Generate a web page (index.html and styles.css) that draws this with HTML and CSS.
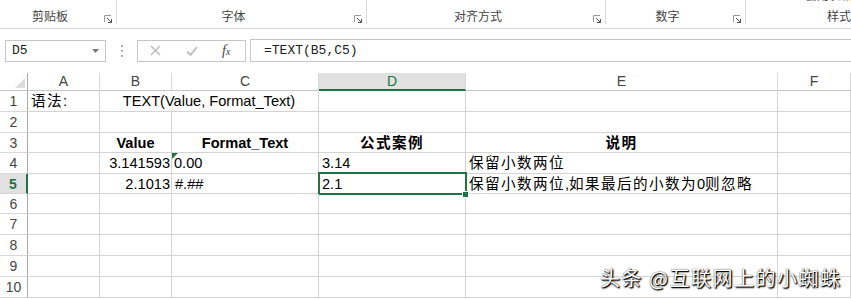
FILE: index.html
```html
<!DOCTYPE html>
<html lang="zh-CN">
<head>
  <meta charset="UTF-8" />
  <title>TEXT 函数</title>
  <link rel="stylesheet" href="styles.css">
</head>
<body>
  <div class="ribbon">
    <div class="group g1">
      <span class="glabel">剪贴板</span>
      <svg class="launch" width="8" height="8" viewBox="0 0 8 8"><path d="M0.5 7V0.5H7" fill="none" stroke="#999"/><path d="M3 3L7.5 7.5M4 7.5H7.5V4" fill="none" stroke="#555"/></svg>
    </div>
    <div class="group g2">
      <span class="glabel">字体</span>
      <svg class="launch" width="8" height="8" viewBox="0 0 8 8"><path d="M0.5 7V0.5H7" fill="none" stroke="#999"/><path d="M3 3L7.5 7.5M4 7.5H7.5V4" fill="none" stroke="#555"/></svg>
    </div>
    <div class="group g3">
      <span class="glabel">对齐方式</span>
      <svg class="launch" width="8" height="8" viewBox="0 0 8 8"><path d="M0.5 7V0.5H7" fill="none" stroke="#999"/><path d="M3 3L7.5 7.5M4 7.5H7.5V4" fill="none" stroke="#555"/></svg>
    </div>
    <div class="group g4">
      <span class="glabel">数字</span>
      <svg class="launch" width="8" height="8" viewBox="0 0 8 8"><path d="M0.5 7V0.5H7" fill="none" stroke="#999"/><path d="M3 3L7.5 7.5M4 7.5H7.5V4" fill="none" stroke="#555"/></svg>
    </div>
    <div class="group g5">
      <span class="cut">套用表格</span>
      <span class="glabel">样式</span>
    </div>
  </div>

  <div class="formulabar">
    <div class="namebox">
      <span>D5</span>
      <svg width="7" height="4" viewBox="0 0 7 4"><path d="M0 0H7L3.5 4z" fill="#777"/></svg>
    </div>
    <div class="dots"><i></i><i></i><i></i></div>
    <div class="fxbox">
      <svg width="11" height="11" viewBox="0 0 11 11"><path d="M1 1L10 10M10 1L1 10" stroke="#b4b4b4" stroke-width="1.2" fill="none"/></svg>
      <svg width="12" height="10" viewBox="0 0 12 10"><path d="M1 5.5L4.5 9L11 1" stroke="#bdbdbd" stroke-width="1.8" fill="none"/></svg>
      <span class="fx">f<small>x</small></span>
    </div>
    <div class="formula">=TEXT(B5,C5)</div>
  </div>

  <div class="sheet">
    <div class="corner"><svg width="10" height="10" viewBox="0 0 10 10"><path d="M10 0V10H0z" fill="#dcdcdc"/></svg></div>
    <div class="colhead">A</div>
    <div class="colhead">B</div>
    <div class="colhead">C</div>
    <div class="colhead active">D</div>
    <div class="colhead">E</div>
    <div class="colhead">F</div>

    <div class="rowhead">1</div>
    <div class="cell"><span class="zh">语法:</span></div>
    <div class="cell span2 center">TEXT(Value, Format_Text)</div>
    <div class="cell"></div>
    <div class="cell"></div>
    <div class="cell"></div>

    <div class="rowhead">2</div>
    <div class="cell"></div><div class="cell"></div><div class="cell"></div><div class="cell"></div><div class="cell"></div><div class="cell"></div>

    <div class="rowhead">3</div>
    <div class="cell"></div>
    <div class="cell center bold">Value</div>
    <div class="cell center bold">Format_Text</div>
    <div class="cell center bold"><span class="zh">公式案例</span></div>
    <div class="cell center bold"><span class="zh">说明</span></div>
    <div class="cell"></div>

    <div class="rowhead">4</div>
    <div class="cell"></div>
    <div class="cell right">3.141593</div>
    <div class="cell flagged">0.00</div>
    <div class="cell">3.14</div>
    <div class="cell"><span class="zh">保留小数两位</span></div>
    <div class="cell"></div>

    <div class="rowhead active">5</div>
    <div class="cell"></div>
    <div class="cell right">2.1013</div>
    <div class="cell">#.##</div>
    <div class="cell selected">2.1<span class="handle"></span></div>
    <div class="cell"><span class="zh">保留小数两位</span>,<span class="zh">如果最后的小数为</span>0<span class="zh">则忽略</span></div>
    <div class="cell"></div>

    <div class="rowhead">6</div>
    <div class="cell"></div><div class="cell"></div><div class="cell"></div><div class="cell"></div><div class="cell"></div><div class="cell"></div>
    <div class="rowhead">7</div>
    <div class="cell"></div><div class="cell"></div><div class="cell"></div><div class="cell"></div><div class="cell"></div><div class="cell"></div>
    <div class="rowhead">8</div>
    <div class="cell"></div><div class="cell"></div><div class="cell"></div><div class="cell"></div><div class="cell"></div><div class="cell"></div>
    <div class="rowhead">9</div>
    <div class="cell"></div><div class="cell"></div><div class="cell"></div><div class="cell"></div><div class="cell"></div><div class="cell"></div>
    <div class="rowhead">10</div>
    <div class="cell"></div><div class="cell"></div><div class="cell"></div><div class="cell"></div><div class="cell"></div><div class="cell"></div>
  </div>

  <div class="watermark">头条 @互联网上的小蜘蛛</div>
</body>
</html>
```

FILE: styles.css
```css
* { box-sizing: border-box; }
body {
  margin: 0;
  width: 851px;
  height: 299px;
  overflow: hidden;
  position: relative;
  background: #fff;
  font-family: "Liberation Sans", "Noto Sans CJK SC", sans-serif;
  color: #000;
}

/* ribbon group labels */
.ribbon {
  display: flex;
  height: 29px;
  border-bottom: 1px solid #d5d5d5;
}
.group {
  flex-shrink: 0;
  display: flex;
  align-items: flex-end;
  height: 24px;
  border-right: 1px solid #dadada;
}
.g1 { width: 117px; }
.g2 { width: 250px; }
.g3 { width: 239px; }
.g4 { width: 140px; }
.g5 { width: 186px; border-right: none; position: relative; }
.glabel {
  flex: 1;
  text-align: center;
  font-family: "Noto Sans CJK SC", sans-serif;
  font-size: 12px;
  line-height: 14px;
  color: #444;
  margin-bottom: 1px;
}
.launch { margin: 0 4px 1px 4px; flex-shrink: 0; }
.cut {
  position: absolute;
  top: -12px;
  left: 59px;
  font-family: "Noto Sans CJK SC", sans-serif;
  font-size: 12px;
  line-height: 14px;
  color: #444;
}

/* formula bar */
.formulabar {
  display: flex;
  align-items: center;
  height: 23px;
  margin-top: 10px;
  padding-left: 5px;
}
.namebox {
  width: 101px;
  height: 22px;
  border: 1px solid #c6c6c6;
  display: flex;
  align-items: center;
  justify-content: space-between;
  padding: 0 6px 0 6px;
  font-family: "Liberation Mono", monospace;
  font-size: 13px;
  color: #222;
}
.dots {
  width: 31px;
  display: flex;
  flex-direction: column;
  align-items: center;
  gap: 3px;
}
.dots i { width: 2px; height: 2px; background: #b0b0b0; }
.fxbox {
  width: 109px;
  height: 22px;
  border: 1px solid #c6c6c6;
  display: flex;
  align-items: center;
  padding-left: 12px;
  gap: 25px;
}
.fx {
  font-family: "Liberation Serif", serif;
  font-style: italic;
  font-size: 14px;
  color: #444;
  margin-left: -1px;
}
.fx small { font-size: 10px; }
.formula {
  flex: 1;
  height: 23px;
  margin-left: 4px;
  border: 1px solid #c6c6c6;
  border-right: none;
  padding-left: 13px;
  font-family: "Liberation Mono", monospace;
  font-size: 13px;
  line-height: 21px;
  color: #222;
}

/* grid */
.sheet {
  display: grid;
  margin-top: 11px;
  grid-template-columns: 28px 72px 72px 147px 147px 312px 73px;
  grid-template-rows: 18px 21px 21px 20px 21px 20px 20px 21px 21px 21px 21px;
  font-size: 14.6px;
}
.corner {
  border-right: 1px solid #ababab;
  border-bottom: 1px solid #c6c6c6;
  display: flex;
  align-items: flex-end;
  justify-content: flex-end;
  padding: 0 2px 2px 0;
}
.colhead {
  border-right: 1px solid #d8d8d8;
  border-bottom: 1px solid #c6c6c6;
  text-align: center;
  font-size: 14px;
  line-height: 17px;
  color: #444;
}
.colhead.active {
  background: #e1e1e1;
  color: #217346;
  border-bottom: 2px solid #217346;
}
.rowhead {
  border-right: 1px solid #ababab;
  border-bottom: 1px solid #d8d8d8;
  text-align: center;
  font-size: 14px;
  line-height: 21px;
  color: #444;
}
.rowhead.active {
  background: #e1e1e1;
  color: #217346;
  font-weight: bold;
  border-right: 2px solid #217346;
}
.cell {
  border-right: 1px solid #d4d4d4;
  border-bottom: 1px solid #d4d4d4;
  padding: 0 3px;
  line-height: 21px;
  white-space: nowrap;
  position: relative;
}
.span2 { grid-column: span 2; }
.center { text-align: center; }
.right { text-align: right; padding-right: 1px; }
.bold { font-weight: bold; }
.zh { letter-spacing: 1.4px; }
.flagged { padding-left: 2px; }
.flagged::before {
  content: "";
  position: absolute;
  left: 0;
  top: 0;
  border-top: 6px solid #217346;
  border-right: 6px solid transparent;
}
.selected::after {
  content: "";
  position: absolute;
  left: -1px;
  top: -2px;
  right: -2px;
  bottom: -2px;
  border: 2px solid #217346;
}
.handle {
  position: absolute;
  right: -4px;
  bottom: -5px;
  width: 7px;
  height: 7px;
  background: #217346;
  border: 1px solid #fff;
  z-index: 1;
}

.watermark {
  position: absolute;
  left: 600px;
  top: 265px;
  font-family: "Noto Sans CJK SC", sans-serif;
  font-size: 20px;
  line-height: 26px;
  color: #fff;
  letter-spacing: 1.5px;
  text-shadow: 1px 1px 1px #000, 1px 1px 2px #222, 0 0 1px #444;
}
```
